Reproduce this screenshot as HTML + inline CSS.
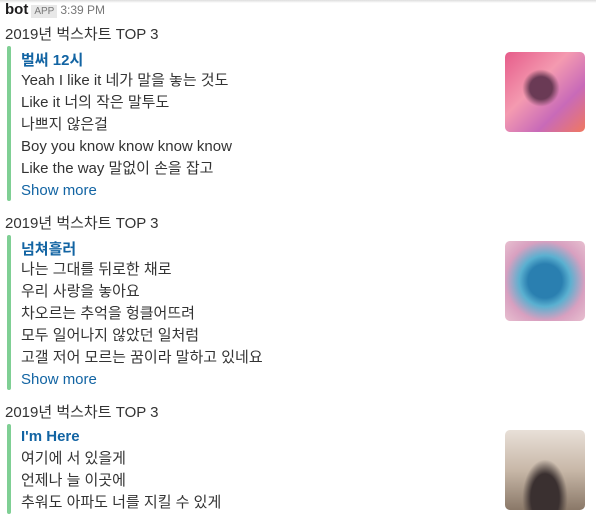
<html><head><style>
body{margin:0;width:596px;height:509px;overflow:hidden;background:#fff;font-family:"Liberation Sans","Noto Sans CJK KR",sans-serif;color:#333;position:relative}
.top{position:absolute;left:0;top:0;width:596px;height:3px;background:linear-gradient(#ddd,#fff)}
.a{position:absolute;white-space:nowrap}
.hd{left:5px;top:1px;font-size:15px}
.hd b{font-weight:bold;color:#1d1c1d}
.app{background:#e8e8e8;color:#777;font-size:10px;padding:1px 3px;margin:0 3px}
.tm{color:#777;font-size:12px}
.h{left:5px;font-size:15px}
.bar{position:absolute;left:7px;width:4px;background:#7fcf94;border-radius:2px}
.t{left:21px;font-size:15px;font-weight:bold;color:#1264a3}
.l{left:21px;font-size:15px;line-height:22px}
.m{color:#1264a3}
.img{position:absolute;left:505px;width:80px;height:80px;border-radius:5px}
</style></head><body>
<div class="top"></div>
<div class="a hd"><b>bot</b><span class="app">APP</span><span class="tm">3:39 PM</span></div>

<div class="a h" style="top:23px">2019년 벅스차트 TOP 3</div>
<div class="bar" style="top:46px;height:155px"></div>
<div class="a t" style="top:49px">벌써 12시</div>
<div class="a l" style="top:70px">Yeah I like it 네가 말을 놓는 것도<br>Like it 너의 작은 말투도<br>나쁘지 않은걸<br>Boy you know know know know<br>Like the way 말없이 손을 잡고<br><span class="m">Show more</span></div>
<div class="img" style="top:52px;background:radial-gradient(circle at 45% 45%,#6a3a55 0 18%,transparent 30%),linear-gradient(135deg,#e65c8a,#f49ab0 40%,#c86ab8 70%,#f07860)"></div>

<div class="a h" style="top:212px">2019년 벅스차트 TOP 3</div>
<div class="bar" style="top:235px;height:155px"></div>
<div class="a t" style="top:238px">넘쳐흘러</div>
<div class="a l" style="top:259px">나는 그대를 뒤로한 채로<br>우리 사랑을 놓아요<br>차오르는 추억을 헝클어뜨려<br>모두 일어나지 않았던 일처럼<br>고갤 저어 모르는 꿈이라 말하고 있네요<br><span class="m">Show more</span></div>
<div class="img" style="top:241px;background:radial-gradient(circle at 50% 50%,#2a7fb0 0 30%,#5ab0d0 45%,#d8a0c0 70%,#e8c0d0)"></div>

<div class="a h" style="top:401px">2019년 벅스차트 TOP 3</div>
<div class="bar" style="top:424px;height:90px"></div>
<div class="a t" style="top:428px">I'm Here</div>
<div class="a l" style="top:448px">여기에 서 있을게<br>언제나 늘 이곳에<br>추워도 아파도 너를 지킬 수 있게</div>
<div class="img" style="top:430px;background:radial-gradient(ellipse at 50% 85%,#3a3030 0 25%,transparent 40%),linear-gradient(#e8e0d8,#c8b8a8 50%,#8a7868)"></div>
</body></html>
